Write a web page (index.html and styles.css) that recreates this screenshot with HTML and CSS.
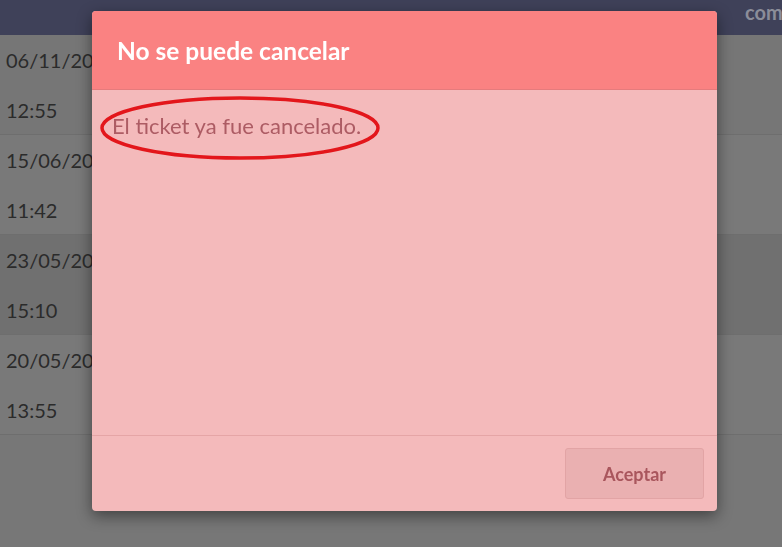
FILE: index.html
```html
<!DOCTYPE html>
<html lang="es">
<head>
    <meta charset="UTF-8">
    <title>Tickets</title>
    <link rel="stylesheet" href="styles.css">
</head>
<body>
<div class="topbar">
    <span class="topbar-link">comisiones</span>
</div>
<div class="list">
    <div class="row row-a">
        <p>06/11/2023</p>
        <p>12:55</p>
    </div>
    <div class="row row-b">
        <p>15/06/2023</p>
        <p>11:42</p>
    </div>
    <div class="row row-c">
        <p>23/05/2023</p>
        <p>15:10</p>
    </div>
    <div class="row row-b">
        <p>20/05/2023</p>
        <p>13:55</p>
    </div>
</div>

<div class="modal">
    <div class="modal-header">
        <h2>No se puede cancelar</h2>
    </div>
    <div class="modal-body">
        <p class="message">El ticket ya fue cancelado.</p>
        <svg class="mark" width="282" height="66" viewBox="0 0 282 66">
            <ellipse cx="141" cy="33" rx="138" ry="30" fill="none" stroke="#e3161b" stroke-width="3.5"/>
        </svg>
    </div>
    <div class="modal-footer">
        <button>Aceptar</button>
    </div>
</div>
</body>
</html>
```

FILE: styles.css
```css
body {
    margin: 0;
    font-family: Lato, "Open Sans", sans-serif;
    background-color: #777777;
    height: 547px;
    overflow: hidden;
}
.topbar {
    height: 35px;
    background-color: #3f4159;
    display: flex;
    justify-content: flex-end;
    overflow: hidden;
}
.topbar-link {
    color: #8b8d99;
    font-weight: bold;
    font-size: 20px;
    margin-top: 0;
    margin-right: -62px;
    white-space: nowrap;
}
.row {
    height: 100px;
    border-bottom: 1px solid #6e6e6e;
    box-sizing: border-box;
    padding-left: 6px;
}
.row p {
    margin: 0;
    height: 50px;
    line-height: 50px;
    font-size: 20px;
    color: #2b2b2b;
}
.row-a {
    background-color: #767676;
}
.row-b {
    background-color: #797979;
}
.row-c {
    background-color: #707070;
}
.modal {
    position: fixed;
    left: 92px;
    top: 11px;
    width: 625px;
    height: 500px;
    border-radius: 4px;
    overflow: hidden;
    display: flex;
    flex-direction: column;
    background-color: #f4babb;
    box-shadow: 0 5px 15px rgba(0,0,0,0.45);
}
.modal-header {
    height: 78px;
    background-color: #fa8282;
    border-bottom: 1px solid #e57b7c;
    display: flex;
    align-items: center;
    padding-left: 25px;
}
.modal-header h2 {
    margin: 0;
    color: white;
    font-size: 24.5px;
    font-weight: bold;
}
.modal-body {
    flex: 1;
    position: relative;
    padding: 22px 20px;
    border-bottom: 1px solid #e5a5a6;
}
.message {
    margin: 0;
    font-size: 22px;
    color: #ad5c64;
}
.mark {
    position: absolute;
    left: 7px;
    top: 5px;
}
.modal-footer {
    height: 75px;
    display: flex;
    justify-content: flex-end;
    align-items: center;
    padding-right: 13px;
}
.modal-footer button {
    width: 139px;
    height: 51px;
    background-color: #eab0b1;
    border: 1px solid #e2a4a5;
    border-radius: 3px;
    color: #a9565d;
    font-family: Lato, sans-serif;
    font-weight: bold;
    font-size: 18px;
}
```
